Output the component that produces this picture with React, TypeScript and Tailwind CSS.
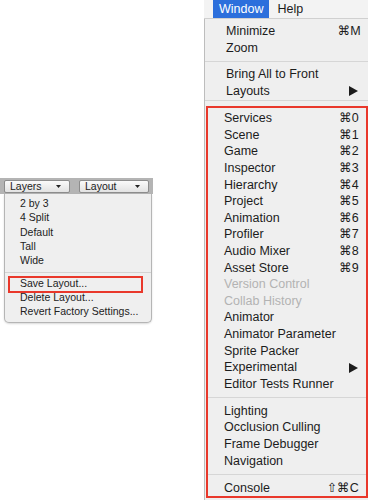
import React from 'react';

interface RowProps {
  label: string;
  shortcut?: string;
  submenu?: boolean;
  disabled?: boolean;
}

const SubArrow = () => (
  <svg width="9" height="10" viewBox="0 0 9 10" className="mr-[1px]">
    <polygon points="0,0 9,5 0,10" fill="#1c1c1c" />
  </svg>
);

const MenuRow: React.FC<RowProps> = ({ label, shortcut, submenu, disabled }) => (
  <div
    className={
      disabled
        ? 'flex h-[16.6px] items-center justify-between text-[#b3b3b3]'
        : 'flex h-[16.6px] items-center justify-between text-[#1c1c1c]'
    }
  >
    <span>{label}</span>
    {shortcut && <span className="tracking-[0.2px]">{shortcut}</span>}
    {submenu && <SubArrow />}
  </div>
);

const Separator: React.FC<{ h: string }> = ({ h }) => (
  <div className={`flex items-center ${h}`}>
    <div className="h-px w-full bg-[#d6d6d6]" />
  </div>
);

const DropButton: React.FC<{ label: string; w: string }> = ({ label, w }) => (
  <div
    className={`flex h-[13px] items-center justify-between rounded-[2px] border border-[#8c8c8c] bg-gradient-to-b from-[#fafafa] to-[#e2e2e2] pl-[5px] pr-[8px] ${w}`}
  >
    <span className="text-[10.5px] leading-none text-[#222]">{label}</span>
    <svg width="5" height="3" viewBox="0 0 5 3">
      <polygon points="0,0 5,0 2.5,3" fill="#222" />
    </svg>
  </div>
);

const layoutItems = ['2 by 3', '4 Split', 'Default', 'Tall', 'Wide'];

const LayoutPanel = () => (
  <div className="w-[200px] pt-[178px]">
    <div className="flex h-[16px] w-[153px] items-center gap-[9px] bg-[#b4b4b4] pl-[4px]">
      <DropButton label="Layers" w="w-[66px]" />
      <DropButton label="Layout" w="w-[70px]" />
    </div>
    <div className="ml-[4px] w-[148px] rounded-b-[5px] border border-t-0 border-[#b5b5b5] bg-[#efefef] pt-[3px] pb-[3px] text-[10.5px] text-[#222] shadow-[0_1px_2px_rgba(0,0,0,0.15)]">
      {layoutItems.map((t) => (
        <div key={t} className="flex h-[14.2px] items-center pl-[15px]">
          {t}
        </div>
      ))}
      <div className="flex h-[9px] items-center">
        <div className="h-px w-full bg-[#d3d3d3]" />
      </div>
      <div className="relative flex h-[14px] items-center pl-[15px]">
        Save Layout...
        <div className="absolute top-[-1px] left-[3px] h-[17px] w-[135px] border-2 border-[#e9382b]" />
      </div>
      <div className="flex h-[14px] items-center pl-[15px]">Delete Layout...</div>
      <div className="flex h-[14px] items-center pl-[15px]">Revert Factory Settings...</div>
    </div>
  </div>
);

const WindowMenu = () => (
  <div className="flex w-[168px] flex-col pl-[4px] text-[12.5px]">
    <div className="flex h-[19px] items-center border-b border-[#d0d0d0] bg-[#f3f3f3] pl-[9px]">
      <div className="flex h-full items-center bg-[#2c6fdc] px-[6px] text-white">Window</div>
      <div className="pl-[8px] text-[#1c1c1c]">Help</div>
    </div>
    <div className="flex-1 border-l border-[#bdbdbd] bg-[#efefef] pt-[4px]">
      <div className="pl-[21px] pr-[7px]">
        <MenuRow label="Minimize" shortcut="⌘M" />
        <MenuRow label="Zoom" />
      </div>
      <Separator h="h-[10px]" />
      <div className="pl-[21px] pr-[9px]">
        <MenuRow label="Bring All to Front" />
        <MenuRow label="Layouts" submenu />
      </div>
      <div className="h-[1px]" />
      <div className="h-px w-full bg-[#d6d6d6]" />
      <div className="ml-[1px] mt-[5px] border-2 border-[#e9382b] pt-[2px]">
        <div className="pl-[16px] pr-[7px]">
          <MenuRow label="Services" shortcut="⌘0" />
          <MenuRow label="Scene" shortcut="⌘1" />
          <MenuRow label="Game" shortcut="⌘2" />
          <MenuRow label="Inspector" shortcut="⌘3" />
          <MenuRow label="Hierarchy" shortcut="⌘4" />
          <MenuRow label="Project" shortcut="⌘5" />
          <MenuRow label="Animation" shortcut="⌘6" />
          <MenuRow label="Profiler" shortcut="⌘7" />
          <MenuRow label="Audio Mixer" shortcut="⌘8" />
          <MenuRow label="Asset Store" shortcut="⌘9" />
          <MenuRow label="Version Control" disabled />
          <MenuRow label="Collab History" disabled />
          <MenuRow label="Animator" />
          <MenuRow label="Animator Parameter" />
          <MenuRow label="Sprite Packer" />
          <MenuRow label="Experimental" submenu />
          <MenuRow label="Editor Tests Runner" />
        </div>
        <Separator h="h-[10.5px]" />
        <div className="pl-[16px] pr-[7px]">
          <MenuRow label="Lighting" />
          <MenuRow label="Occlusion Culling" />
          <MenuRow label="Frame Debugger" />
          <MenuRow label="Navigation" />
        </div>
        <Separator h="h-[10.5px]" />
        <div className="pl-[16px] pr-[7px]">
          <MenuRow label="Console" shortcut="⇧⌘C" />
        </div>
      </div>
    </div>
  </div>
);

export default function App() {
  return (
    <div className="flex h-[500px] w-[368px] overflow-hidden bg-white font-['Liberation_Sans','DejaVu_Sans',sans-serif]">
      <LayoutPanel />
      <WindowMenu />
    </div>
  );
}
